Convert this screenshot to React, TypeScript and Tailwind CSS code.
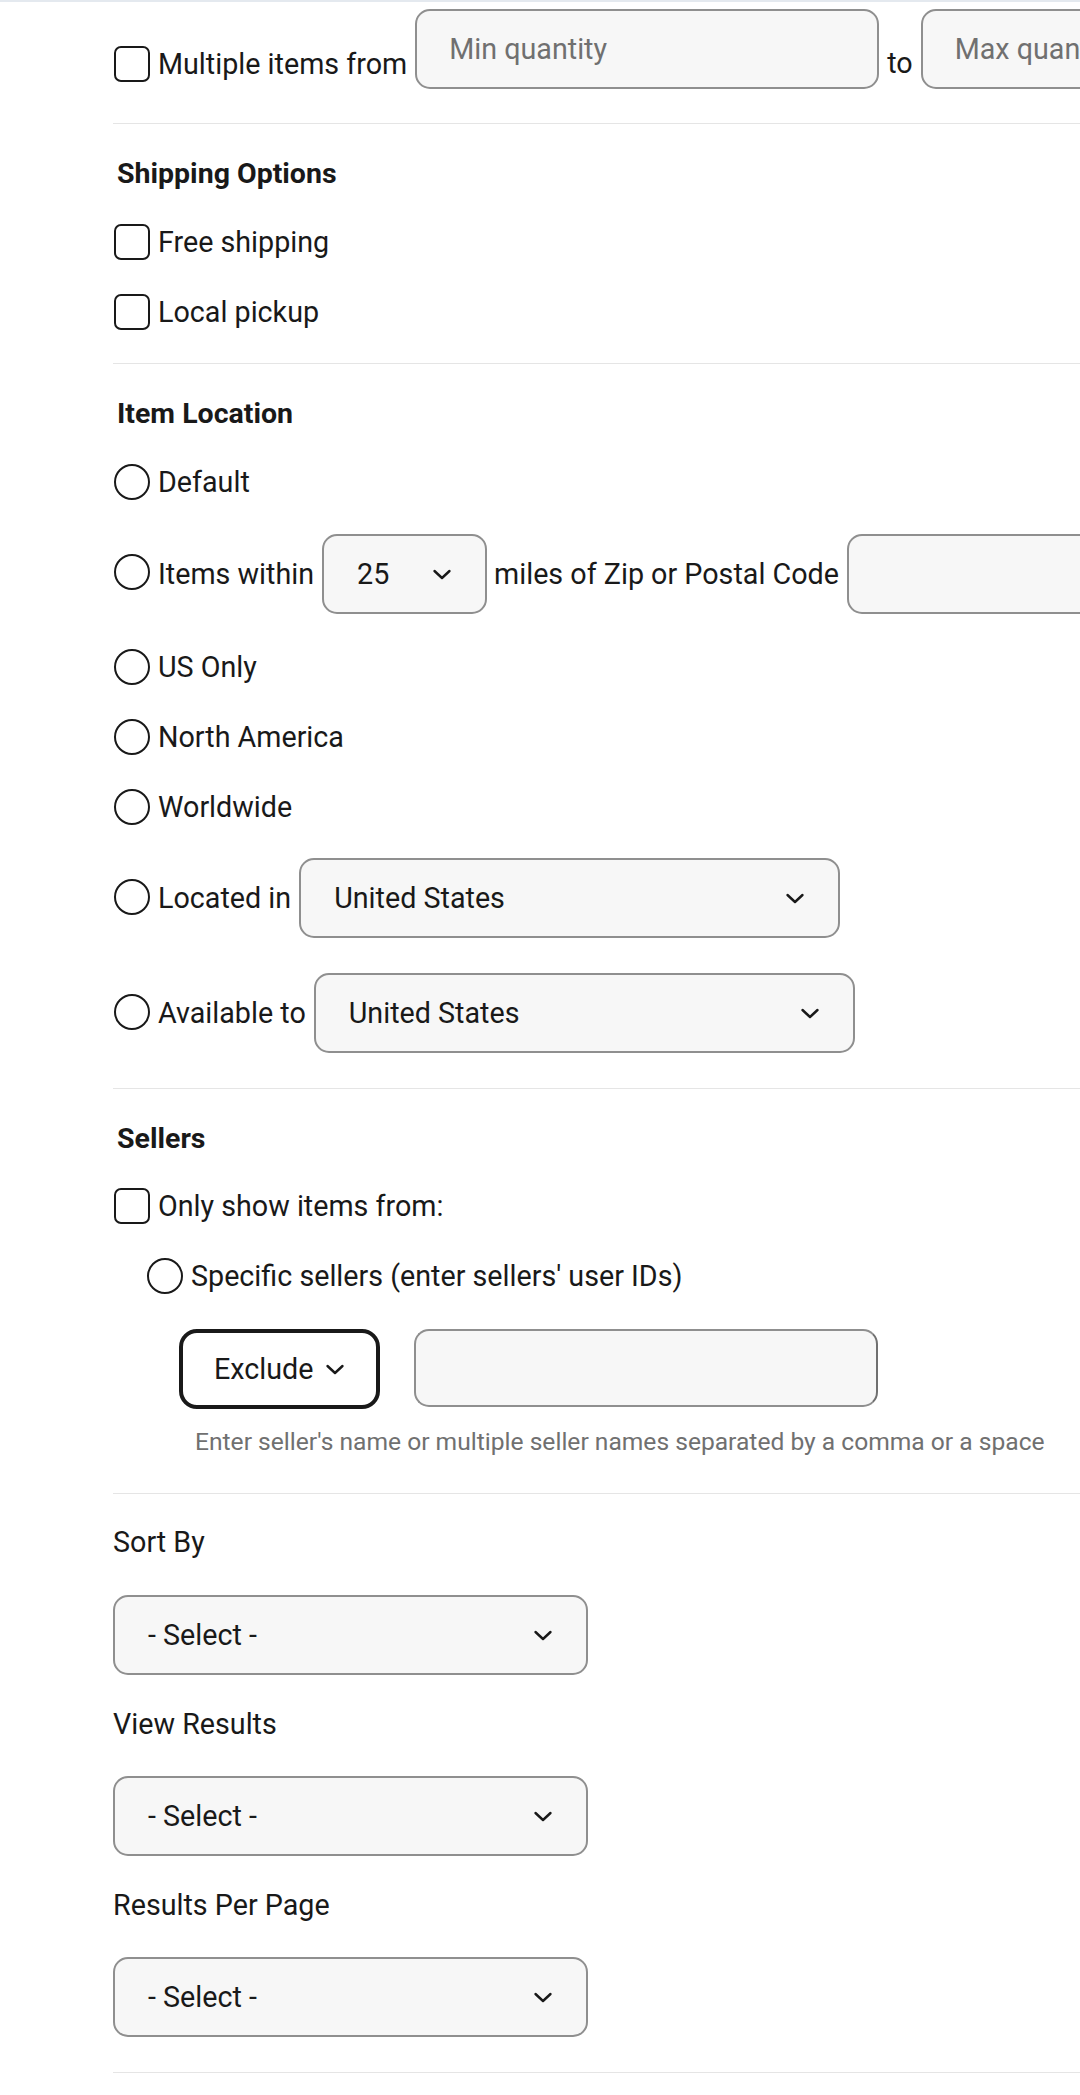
import React from "react";

const font = { fontFamily: "Roboto, 'Noto Sans', Arial, sans-serif" };

function Chevron() {
  return (
    <svg width="20" height="11" viewBox="0 0 20 11" fill="none" className="shrink-0">
      <path d="M2.5 2 L10 9 L17.5 2" stroke="#191919" strokeWidth="2.4" strokeLinecap="round" strokeLinejoin="round" />
    </svg>
  );
}

function Checkbox() {
  return <span className="block w-[36px] h-[36px] rounded-[7px] border-2 border-[#191919] bg-white shrink-0" />;
}

function Radio() {
  return <span className="block w-[36px] h-[36px] rounded-full border-2 border-[#191919] bg-white shrink-0" />;
}

function TextField({ placeholder, width }: { placeholder?: string; width: string }) {
  return (
    <div
      className={`${width} h-[80px] shrink-0 rounded-[15px] border-2 border-[#8f8f8f] bg-[#f7f7f7] flex items-center px-[32px] text-[#707070] whitespace-nowrap overflow-hidden`}
    >
      {placeholder}
    </div>
  );
}

function Select({ value, width }: { value: string; width: string }) {
  return (
    <div
      className={`${width} h-[80px] shrink-0 rounded-[15px] border-2 border-[#8f8f8f] bg-[#f7f7f7] flex items-center justify-between px-[33px] text-[#191919] whitespace-nowrap`}
    >
      <span>{value}</span>
      <Chevron />
    </div>
  );
}

function OptionRow({ kind, label, mt }: { kind: "check" | "radio"; label: string; mt: string }) {
  return (
    <div className={`${mt} h-[36px] flex items-center gap-[8px] ml-[1px]`}>
      {kind === "check" ? <Checkbox /> : <Radio />}
      <span className="whitespace-nowrap">{label}</span>
    </div>
  );
}

function Divider({ mt }: { mt: string }) {
  return <div className={`${mt} h-px bg-[#e5e5e5]`} />;
}

function Heading({ children, mt }: { children: React.ReactNode; mt: string }) {
  return <h3 className={`${mt} pl-[4px] font-bold text-[28.5px] leading-[43px] text-[#191919]`}>{children}</h3>;
}

export default function App() {
  return (
    <div
      className="w-[1080px] min-h-[2095px] bg-white overflow-hidden border-t-2 border-[#e4e9ef] text-[28.7px] leading-[43px] text-[#191919]"
      style={font}
    >
      <div className="pl-[113px] pt-[7px] flex flex-col">
        {/* Quantity */}
        <div className="flex items-start">
          <div className="mt-[37px] h-[36px] flex items-center gap-[8px] ml-[1px] shrink-0">
            <Checkbox />
            <span className="whitespace-nowrap">Multiple items from</span>
          </div>
          <div className="ml-[8px]">
            <TextField placeholder="Min quantity" width="w-[464px]" />
          </div>
          <span className="mt-[33px] mx-[8px] whitespace-nowrap">to</span>
          <TextField placeholder="Max quantity" width="w-[464px]" />
        </div>

        <Divider mt="mt-[34px]" />

        {/* Shipping */}
        <Heading mt="mt-[28px]">Shipping Options</Heading>
        <OptionRow kind="check" label="Free shipping" mt="mt-[29px]" />
        <OptionRow kind="check" label="Local pickup" mt="mt-[34px]" />

        <Divider mt="mt-[33px]" />

        {/* Location */}
        <Heading mt="mt-[28px]">Item Location</Heading>
        <OptionRow kind="radio" label="Default" mt="mt-[29px]" />
        <div className="mt-[34px] h-[80px] flex items-center ml-[1px]">
          <span className="mb-[5px]"><Radio /></span>
          <span className="ml-[8px] whitespace-nowrap">Items within</span>
          <div className="ml-[8px]">
            <Select value="25" width="w-[165px]" />
          </div>
          <span className="ml-[7px] whitespace-nowrap">miles of Zip or Postal Code</span>
          <div className="ml-[8px]">
            <TextField width="w-[464px]" />
          </div>
        </div>
        <OptionRow kind="radio" label="US Only" mt="mt-[35px]" />
        <OptionRow kind="radio" label="North America" mt="mt-[34px]" />
        <OptionRow kind="radio" label="Worldwide" mt="mt-[34px]" />
        <div className="mt-[33px] h-[80px] flex items-center ml-[1px]">
          <span className="mb-[3px]"><Radio /></span>
          <span className="ml-[8px] whitespace-nowrap">Located in</span>
          <div className="ml-[8px]">
            <Select value="United States" width="w-[541px]" />
          </div>
        </div>
        <div className="mt-[35px] h-[80px] flex items-center ml-[1px]">
          <span className="mb-[3px]"><Radio /></span>
          <span className="ml-[8px] whitespace-nowrap">Available to</span>
          <div className="ml-[8px]">
            <Select value="United States" width="w-[541px]" />
          </div>
        </div>

        <Divider mt="mt-[35px]" />

        {/* Sellers */}
        <Heading mt="mt-[28px]">Sellers</Heading>
        <OptionRow kind="check" label="Only show items from:" mt="mt-[28px]" />
        <div className="ml-[33px]">
          <OptionRow kind="radio" label="Specific sellers (enter sellers' user IDs)" mt="mt-[34px]" />
        </div>
        <div className="mt-[35px] ml-[66px] flex items-start">
          <button className="h-[80px] w-[201px] shrink-0 rounded-[18px] border-4 border-[#191919] bg-white flex items-center justify-between px-[31px] text-[#191919]">
            <span>Exclude</span>
            <Chevron />
          </button>
          <div className="ml-[34px] h-[78px] w-[464px] rounded-[15px] border-2 border-[#8f8f8f] border-r-[#707070] bg-[#f7f7f7]" />
        </div>
        <p className="mt-[17px] ml-[82px] text-[24.6px] leading-[32px] text-[#707070] whitespace-nowrap">
          Enter seller's name or multiple seller names separated by a comma or a space
        </p>

        <Divider mt="mt-[35px]" />

        {/* Display */}
        <label className="mt-[27px] block">Sort By</label>
        <div className="mt-[31px]">
          <Select value="- Select -" width="w-[475px]" />
        </div>
        <label className="mt-[28px] block">View Results</label>
        <div className="mt-[30px]">
          <Select value="- Select -" width="w-[475px]" />
        </div>
        <label className="mt-[28px] block">Results Per Page</label>
        <div className="mt-[30px]">
          <Select value="- Select -" width="w-[475px]" />
        </div>

        <Divider mt="mt-[35px]" />
      </div>
    </div>
  );
}
